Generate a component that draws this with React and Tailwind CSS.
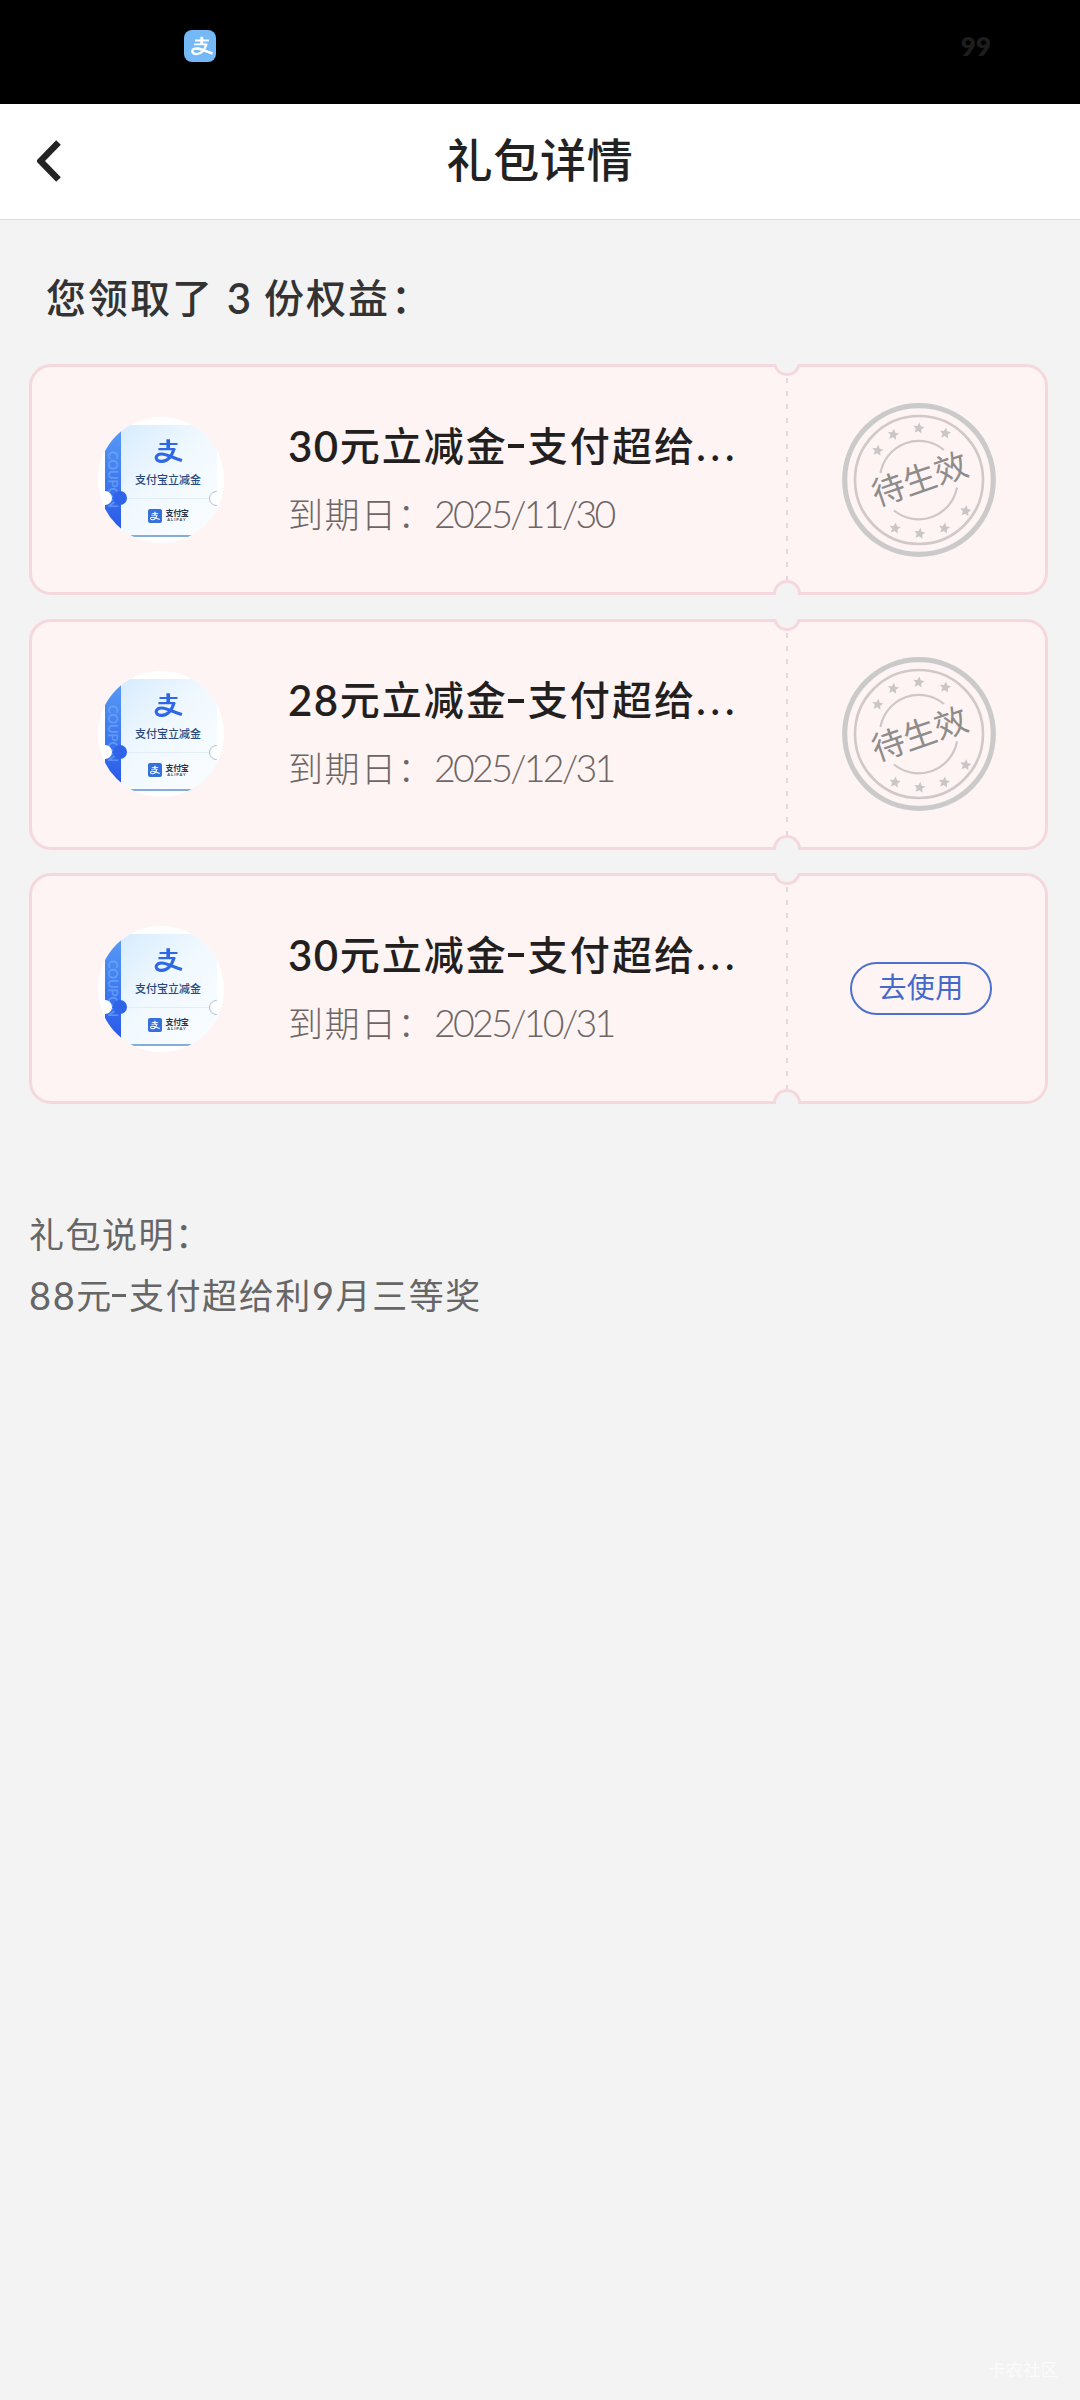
const coupons = [
  { id: 1, amount: '30', date: '2025/11/30', status: 'pending' },
  { id: 2, amount: '28', date: '2025/12/31', status: 'pending' },
  { id: 3, amount: '30', date: '2025/10/31', status: 'usable' },
];

const stars = [
  [58.7, 69.3], [74.3, 53.3], [99.7, 47], [126.3, 52],
  [146.7, 129.7], [125.3, 147], [100.7, 152.3], [76, 147],
];

const AlipayMark = ({ className }) => (
  <svg viewBox="0 0 100 100" className={className} fill="none" stroke="currentColor">
    <path d="M18 25H82M14 43H74" strokeWidth="8" />
    <path d="M49 8V43" strokeWidth="13" />
    <path d="M70 41C64 62 50 86 26 87C6 88 1 72 12 64C28 54 50 68 98 84" strokeWidth="11" />
  </svg>
);

const Voucher = () => (
  <div className="relative size-[126px] shrink-0 overflow-hidden rounded-full bg-white">
    <div className="absolute left-[7px] top-[8px] flex h-28 w-28 overflow-hidden border-b-2 border-[#86add8] bg-linear-to-br from-[#d3eafe] via-[#f1f9ff] to-[#fafdff]">
      <div className="flex h-full w-4 shrink-0 items-center justify-center bg-linear-to-b from-[#5b9cf5] to-[#2854e8]">
        <span className="font-['Lato'] text-[13px] font-bold leading-4 text-[#86b7fa]/50 [writing-mode:vertical-rl]">COUPON</span>
      </div>
      <div className="-ml-0.5 flex grow flex-col items-center">
        <AlipayMark className="mt-[12px] h-[28px] w-[29px] text-[#2f68e4]" />
        <div className="mt-[6px] whitespace-nowrap text-[11px] font-medium leading-[18px] text-[#27497d]">支付宝立减金</div>
        <div className="mt-[9px] h-px w-full bg-[#e3edf8]" />
        <div className="mt-[10px] flex items-center gap-1">
          <span className="flex size-[14px] items-center justify-center rounded-xs bg-[#3570dc]">
            <AlipayMark className="size-[10px] text-white" />
          </span>
          <span className="flex flex-col items-center text-[#26334d]">
            <span className="text-[8px] font-bold leading-[9px] tracking-[-0.4px]">支付宝</span>
            <span className="text-[4px] font-bold leading-[4px] tracking-[1px]">ALIPAY</span>
          </span>
        </div>
      </div>
      <div className="absolute left-[8px] top-[66px] size-[14px] rounded-full bg-[#2f63e8]" />
      <div className="absolute left-[-7px] top-[66px] size-[14px] rounded-full bg-white" />
      <div className="absolute left-[104px] top-[66px] size-[15px] rounded-full border border-[#a9bdd6] bg-white" />
    </div>
  </div>
);

const Stamp = () => (
  <div className="relative flex size-[154px] items-center justify-center">
    <svg viewBox="23 22 154 154" className="absolute inset-0" fill="none">
      <circle cx="100" cy="99" r="74.3" stroke="#cbcaca" strokeWidth="5.2" />
      <circle cx="100" cy="99" r="64" stroke="#d0c8c9" strokeWidth="2.6" />
      <path d="M61.5 92A39 39 0 0 1 125 69" stroke="#cfc6c7" strokeWidth="2.2" />
      <path d="M138 106.500A39 39 0 0 1 75 129.500" stroke="#cfc6c7" strokeWidth="2.2" />
      {stars.map(([x, y]) => (
        <path
          key={`${x}-${y}`}
          transform={`translate(${x} ${y}) rotate(8)`}
          d="M0 -5.500L1.700 -1.900L5.600 -1.600L2.700 1.200L3.500 5L0 3.100L-3.500 5L-2.700 1.200L-5.600 -1.600L-1.700 -1.900Z"
          fill="#c9c6c7"
        />
      ))}
    </svg>
    <span className="relative -top-px left-px -rotate-[19deg] whitespace-nowrap text-[33px] leading-none text-[#8f8c8c]">待生效</span>
  </div>
);

const Coupon = ({ amount, date, status }) => (
  <div className="relative flex h-[231px] rounded-[22px] border-[3px] border-[#f5d8dd] bg-[#fdf4f3]">
    <div className="flex w-[754px] items-center pl-[66px]">
      <Voucher />
      <div className="ml-[64px] flex flex-col">
        <div className="-mt-[3px] flex h-[60px] items-center whitespace-nowrap text-[40px] font-medium leading-[60px] text-[#231f1f]">
          <span className="text-[42px] font-semibold tracking-[1.5px]">{amount}</span>
          <span className="tracking-[2px]">元立减金</span>
          <span className="w-5 overflow-hidden"><span className="block h-[5px] w-4 translate-y-px bg-[#231f1f]" /></span>
          <span className="tracking-[2.1px]">支付超给</span>
          <span className="font-semibold tracking-[5px]">...</span>
        </div>
        <div className="mt-[11px] flex h-[54px] items-center whitespace-nowrap text-[35px] font-light leading-[54px] text-[#6d6666]">
          <span className="w-[146px] tracking-[1.5px]">到期日：</span>
          <span className="text-[37.500px] tracking-[-2.7px]">{date}</span>
        </div>
      </div>
    </div>
    <div className="mt-[11px] h-[202px] w-[2px] shrink-0 bg-[repeating-linear-gradient(to_bottom,#e4d8da_0px,#e4d8da_5px,transparent_5px,transparent_13.17px)]" />
    <div className="flex grow items-center justify-center pl-1">
      {status === 'pending' ? (
        <Stamp />
      ) : (
        <button className="ml-[5px] h-[53px] w-[142px] rounded-full border-2 border-[#4c70cf] pb-[3px] text-[28px] leading-[44px] tracking-[0.4px] text-[#436acb]">去使用</button>
      )}
    </div>
    {/* ticket notches */}
    <div className="absolute -top-[3px] left-[741px] h-[12px] w-7 overflow-hidden">
      <div className="absolute bottom-0 size-7 rounded-full border-[3px] border-[#f5d8dd] bg-[#f3f3f3]" />
    </div>
    <div className="absolute -bottom-[3px] left-[741px] h-[15px] w-7 overflow-hidden">
      <div className="size-7 rounded-full border-[3px] border-[#f5d8dd] bg-[#f3f3f3]" />
    </div>
  </div>
);

const App = () => {
  return (
    <div className="flex h-[2400px] w-[1080px] flex-col bg-[#f3f3f3] font-['Lato','Noto_Sans_CJK_SC',sans-serif]">
      <div className="flex h-[104px] shrink-0 items-start justify-between bg-black pl-[184px] pr-[89px] pt-[30px]">
        <span className="flex size-8 items-center justify-center rounded-lg bg-[#74b8f8]">
          <AlipayMark className="ml-1 size-[22px] text-white" />
        </span>
        <span className="text-[26px] font-extrabold leading-8 text-[#1d1d1d]">99</span>
      </div>
      <header className="flex h-[116px] shrink-0 items-center border-b border-[#dedede] bg-white">
        <svg viewBox="0 0 24 42" className="mb-px ml-[37px] h-[42px] w-6" fill="none">
          <path d="M21.500 2.500L3.500 21L21.500 39.500" stroke="#242424" strokeWidth="6.500" />
        </svg>
        <h1 className="mb-[5px] mr-[61px] grow text-center text-[46px] font-medium tracking-[0.8px] text-[#222]">礼包详情</h1>
      </header>
      <main className="flex flex-col px-[29px]">
        <h2 className="ml-[17px] mt-[48px] flex h-[60px] items-center whitespace-pre text-[40px] font-medium leading-[60px] text-[#333]">
          <span className="tracking-[2px]">您领取了</span>
          <span className="w-[50px] text-center text-[42px] font-semibold">3</span>
          <span className="tracking-[2px]">份权益</span>
          <span className="ml-px">：</span>
        </h2>
        <div className="mr-[3px] mt-[36px] flex flex-col gap-[23.5px]">
          {coupons.map((c) => (
            <Coupon key={c.id} {...c} />
          ))}
        </div>
        <div className="mt-[100px] text-[35px] leading-[61px] text-[#666]">
          <p className="tracking-[1.5px]">礼包说明：</p>
          <p className="flex items-center whitespace-nowrap tracking-[1.6px]">
            <span className="text-[38px]">88</span>元
            <span className="ml-[-1px] mr-[3px] h-[3px] w-[14px] bg-[#666]" />
            支付超给利<span className="text-[38px]">9</span>月三等奖
          </p>
        </div>
      </main>
      <div className="mb-4 mr-[22px] mt-auto self-end text-[17.500px] leading-7 text-[#fbfbfb]">卡农社区</div>
    </div>
  );
};

export default App;
